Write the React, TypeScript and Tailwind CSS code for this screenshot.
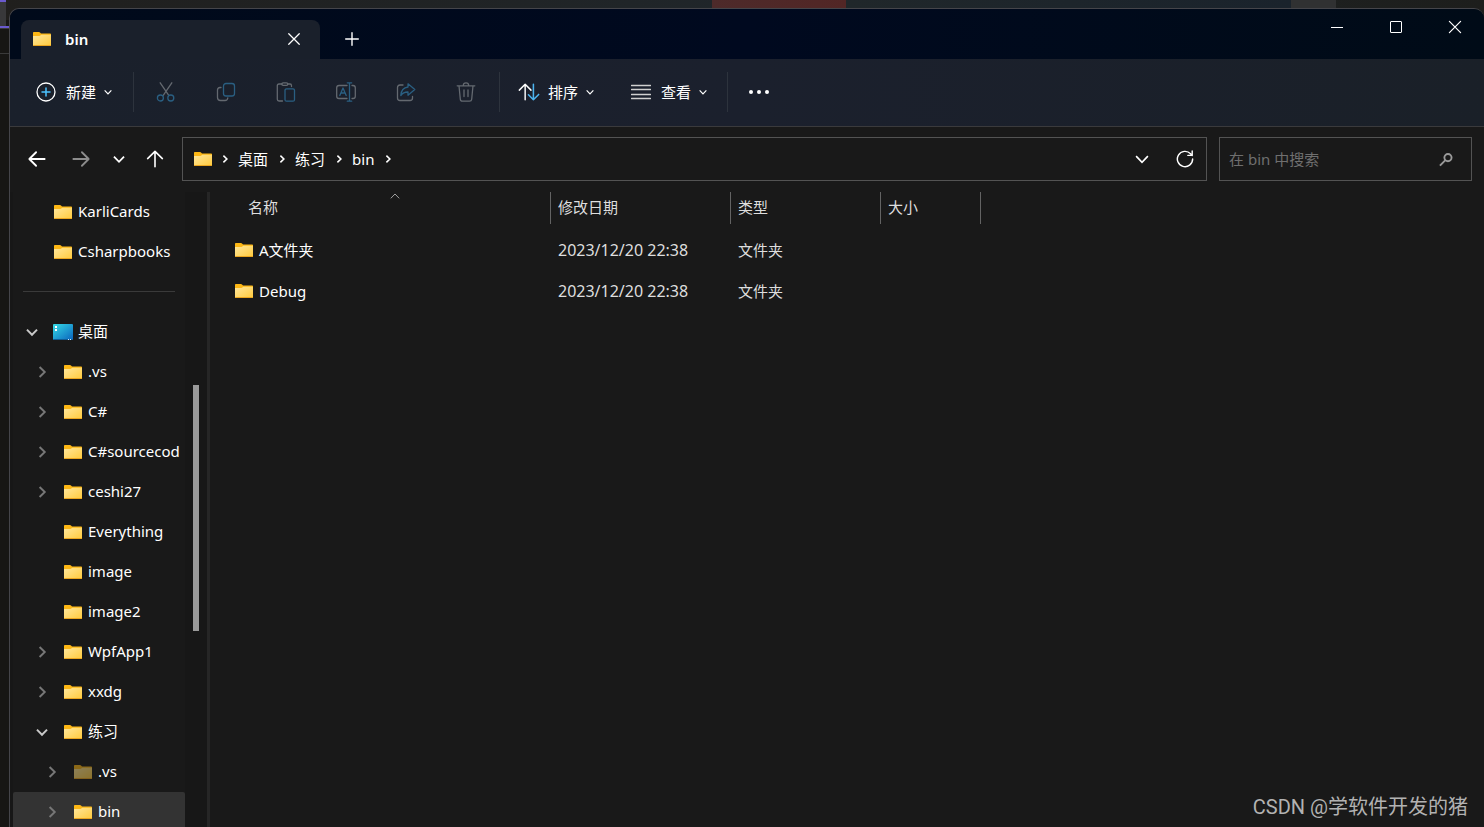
import type { ReactNode } from 'react'

type TreeItem = {
  name: string
  level: 0 | 1 | 2
  state?: 'open' | 'closed'
  icon?: 'folder' | 'desktop' | 'hidden'
  selected?: boolean
}

const pinned: TreeItem[] = [
  { name: 'KarliCards', level: 0 },
  { name: 'Csharpbooks', level: 0 },
]

const tree: TreeItem[] = [
  { name: '桌面', level: 0, state: 'open', icon: 'desktop' },
  { name: '.vs', level: 1, state: 'closed' },
  { name: 'C#', level: 1, state: 'closed' },
  { name: 'C#sourcecod', level: 1, state: 'closed' },
  { name: 'ceshi27', level: 1, state: 'closed' },
  { name: 'Everything', level: 1 },
  { name: 'image', level: 1 },
  { name: 'image2', level: 1 },
  { name: 'WpfApp1', level: 1, state: 'closed' },
  { name: 'xxdg', level: 1, state: 'closed' },
  { name: '练习', level: 1, state: 'open' },
  { name: '.vs', level: 2, state: 'closed', icon: 'hidden' },
  { name: 'bin', level: 2, state: 'closed', selected: true },
]

const files = [
  { name: 'A文件夹', date: '2023/12/20 22:38', type: '文件夹' },
  { name: 'Debug', date: '2023/12/20 22:38', type: '文件夹' },
]

const indent = { 0: 'pl-0', 1: 'pl-[10px]', 2: 'pl-5' }

function FolderIcon({ faded = false }: { faded?: boolean }) {
  return (
    <svg width="18" height="14" viewBox="0 0 18 14" className={faded ? 'shrink-0 opacity-50' : 'shrink-0'} aria-hidden="true">
      <defs>
        <linearGradient id="folder-front" x1="0" y1="0" x2="1" y2="1">
          <stop offset="0" stopColor="#ffe79c" />
          <stop offset="1" stopColor="#ffca3c" />
        </linearGradient>
      </defs>
      <path d="M0 .8Q0 0 .8 0H6q.6 0 1 .5L8 1.500h9.200q.8 0 .8.8V13H0z" fill="#fdb714" />
      <path d="M0 4h6.400q.6 0 1-.4l.8-.8H18V13.200q0 .8-.8.8H.8Q0 14 0 13.200z" fill="url(#folder-front)" />
      <path d="M0 13h18v.2q0 .8-.8.8H.8Q0 14 0 13.200z" fill="#eba51e" />
    </svg>
  )
}

function DesktopIcon() {
  return (
    <svg width="20" height="16" viewBox="0 0 20 16" className="shrink-0" aria-hidden="true">
      <defs>
        <linearGradient id="desktop-bg" x1="0" y1="0" x2="1" y2="1">
          <stop offset="0" stopColor="#35dbe6" />
          <stop offset="1" stopColor="#0a63bd" />
        </linearGradient>
      </defs>
      <rect width="20" height="16" rx="1" fill="url(#desktop-bg)" />
      <path d="M0 15h20q0 1-1 1H1q-1 0-1-1z" fill="#0f5c94" />
      <path d="M2 2h2v2H2zM2 5h2v2H2z" fill="#fff" />
      <path d="M15 15h1v1h-1zM17 15h1v1h-1z" fill="#cfe9ff" />
    </svg>
  )
}

function Chevron({ dir, size = 10, width = 1.5 }: { dir: 'up' | 'down' | 'right'; size?: number; width?: number }) {
  const paths = {
    up: 'M.8 7.300 5 3l4.200 4.300',
    down: 'M.8 3 5 7.300 9.200 3',
    right: 'M3 .8 7.300 5 3 9.200',
  }
  return (
    <svg width={size} height={size} viewBox="0 0 10 10" fill="none" stroke="currentColor" strokeWidth={width} aria-hidden="true">
      <path d={paths[dir]} />
    </svg>
  )
}

function Icon({ children, size = 20, width = 1.3 }: { children: ReactNode; size?: number; width?: number }) {
  return (
    <svg
      width={size}
      height={size}
      viewBox="0 0 20 20"
      fill="none"
      stroke="currentColor"
      strokeWidth={width}
      strokeLinecap="round"
      strokeLinejoin="round"
      className="shrink-0"
      aria-hidden="true"
    >
      {children}
    </svg>
  )
}

const blue = '#2a5f82'

const actions = [
  {
    label: '剪切',
    icon: (
      <>
        <path d="M4.200.8 12.600 13.200M15.800.8 7.400 13.200" />
        <circle cx="4.400" cy="16" r="3" stroke={blue} />
        <circle cx="14.800" cy="16" r="3" stroke={blue} />
      </>
    ),
  },
  {
    label: '复制',
    icon: (
      <>
        <path d="M5 5.500H4q-2.500 0-2.500 2.500v7.500Q1.500 18.500 4.500 18.500H9q2.500 0 2.800-2.500" />
        <rect x="7.500" y="1.500" width="11" height="12.500" rx="2.500" stroke={blue} />
      </>
    ),
  },
  {
    label: '粘贴',
    icon: (
      <>
        <path d="M6 2H3Q1.300 2 1.300 3.700v13.600Q1.300 19 3 19h3.500M12 2h2q1.500 0 1.500 1.700V4.500" />
        <rect x="5.800" y=".8" width="6" height="2.600" rx="1.300" />
        <rect x="9" y="6.800" width="9.500" height="12.400" rx="1.500" stroke={blue} />
      </>
    ),
  },
  {
    label: '重命名',
    icon: (
      <>
        <path d="M11 3.500H3Q.7 3.500.7 5.800v8.400Q.7 16.500 3 16.500h8M16 3.500h1q2.300 0 2.300 2.300v8.400q0 2.300-2.300 2.300h-1" />
        <path d="M3.800 13.500 7 6l3.200 7.500M5 11h4M13.500.8v18.400M11.300.8h4.400M11.300 19.200h4.400" stroke={blue} />
      </>
    ),
  },
  {
    label: '共享',
    icon: (
      <>
        <path d="M7 3H4Q1.500 3 1.500 5.500V16q0 2.500 2.500 2.500h10q2.500 0 2.500-2.500v-1.500" />
        <path d="M12 1.800 18.800 7.500 12 13.200V10Q7.500 9.800 4.800 13.500 5.300 5.800 12 5z" stroke={blue} />
      </>
    ),
  },
  {
    label: '删除',
    icon: (
      <>
        <path d="M1.200 3.800h17.600M7.300 3.500q0-2.700 2.700-2.700t2.700 2.700M3 3.800l1.300 13.400q.2 2 2.200 2h7q2 0 2.200-2L17 3.800M8 8v6.500M12 8v6.500" />
      </>
    ),
  },
]

function Separator() {
  return <div className="h-10 w-px bg-[#2d333d]" />
}

function TitleBar() {
  return (
    <header className="flex h-[50px] items-end bg-linear-to-r from-[#000a1a] via-[#00091f] to-[#000b17]">
      <div className="ml-[11px] flex h-[39px] w-[299px] items-center rounded-t-lg bg-[#1a202b] pr-4 pl-3">
        <FolderIcon />
        <span className="ml-3.5 grow text-[15px] font-semibold">bin</span>
        <button type="button" aria-label="关闭标签页" className="flex size-5 items-center justify-center">
          <Icon size={14}>
            <path d="M2.500 2.500l15 15M17.500 2.500l-15 15" strokeWidth="1.800" />
          </Icon>
        </button>
      </div>
      <button type="button" aria-label="新建标签页" className="ml-3 flex h-[39px] w-10 items-center justify-center">
        <Icon size={14}>
          <path d="M10 1v18M1 10h18" strokeWidth="2" />
        </Icon>
      </button>
      <div className="ml-auto flex self-start">
        <button type="button" aria-label="最小化" className="flex h-9 w-[59px] items-center justify-center">
          <span className="h-px w-3 bg-white" />
        </button>
        <button type="button" aria-label="最大化" className="flex h-9 w-[59px] items-center justify-center">
          <span className="size-3 rounded-[1px] border border-white" />
        </button>
        <button type="button" aria-label="关闭" className="flex h-9 w-[59px] items-center justify-center">
          <Icon size={14}>
            <path d="M2 2l16 16M18 2 2 18" strokeWidth="1.700" />
          </Icon>
        </button>
      </div>
    </header>
  )
}

function Toolbar() {
  return (
    <div className="flex h-[69px] items-center border-b border-[#3a3a3c] bg-linear-to-r from-[#1a202b] via-[#1b202d] to-[#1a2028] text-[15px]">
      <button type="button" className="flex h-10 w-[123px] items-center pl-[26px]">
        <Icon>
          <circle cx="10" cy="10" r="9" />
          <path d="M10 6v8M6 10h8" stroke="#4cc2ff" strokeWidth="1.500" />
        </Icon>
        <span className="mr-2 ml-2.5">新建</span>
        <Chevron dir="down" size={8} />
      </button>
      <Separator />
      <div className="mr-[3px] ml-0.5 flex text-[#646970]">
        {actions.map((a) => (
          <button key={a.label} type="button" aria-label={a.label} disabled className="flex h-10 w-[60px] items-center justify-center">
            <Icon>{a.icon}</Icon>
          </button>
        ))}
      </div>
      <Separator />
      <button type="button" className="flex h-10 w-28 items-center pl-[18px]">
        <Icon size={22}>
          <path d="M6.500 17V3M1.200 8.300 6.500 3l5.300 5.300" />
          <path d="M14 3v14M9.500 12.500 14 17l4.800-4.800" stroke="#4cb4f0" strokeWidth="1.400" />
        </Icon>
        <span className="mr-2 ml-2">排序</span>
        <Chevron dir="down" size={8} />
      </button>
      <button type="button" className="flex h-10 w-[115px] items-center pl-[19px]">
        <Icon>
          <path d="M.5 3.500h19M.5 7.500h19M.5 12.500h19M.5 16.500h19" stroke="#d0d0d0" />
        </Icon>
        <span className="mr-2 ml-2.5">查看</span>
        <Chevron dir="down" size={8} />
      </button>
      <Separator />
      <button type="button" aria-label="更多" className="flex h-10 w-[62px] items-center justify-center gap-1">
        <span className="size-1 rounded-full bg-white" />
        <span className="size-1 rounded-full bg-white" />
        <span className="size-1 rounded-full bg-white" />
      </button>
    </div>
  )
}

function Crumb({ children }: { children: ReactNode }) {
  return (
    <>
      <button type="button">{children}</button>
      <span className="flex w-[27px] justify-center">
        <Chevron dir="right" size={8} width={2} />
      </span>
    </>
  )
}

function AddressRow() {
  return (
    <div className="flex h-[65px] items-start pt-2.5 pr-3 text-[15px]">
      <button type="button" aria-label="后退" className="ml-[5px] flex h-11 w-11 items-center justify-center">
        <Icon size={18}>
          <path d="M18.500 10H2M9 2.500 1.500 10 9 17.500" strokeWidth="2" />
        </Icon>
      </button>
      <button type="button" aria-label="前进" className="flex h-11 w-11 items-center justify-center text-[#8c8c8c]">
        <Icon size={18}>
          <path d="M1.500 10H18M11 2.500 18.500 10 11 17.500" strokeWidth="2" />
        </Icon>
      </button>
      <button type="button" aria-label="最近位置" className="flex h-11 w-8 items-center justify-center">
        <Chevron dir="down" size={12} />
      </button>
      <button type="button" aria-label="上移" className="flex h-11 w-10 items-center justify-center">
        <Icon size={18}>
          <path d="M10 18.500V2M1.800 9.500 10 1.500l8.200 8" strokeWidth="1.800" />
        </Icon>
      </button>
      <nav className="ml-[7px] flex h-11 grow items-center border border-[#535353] pl-[11px]">
        <FolderIcon />
        <span className="flex w-[26px] justify-center">
          <Chevron dir="right" size={8} width={2} />
        </span>
        <Crumb>桌面</Crumb>
        <Crumb>练习</Crumb>
        <Crumb>bin</Crumb>
        <button type="button" aria-label="历史记录" className="ml-auto flex h-10 w-[43px] items-center justify-center">
          <Chevron dir="down" size={14} width={1.2} />
        </button>
        <button type="button" aria-label="刷新" className="flex h-10 w-[43px] items-center justify-center">
          <Icon size={18}>
            <path d="M18.500 10a8.500 8.500 0 1 1-2.300-5.800L18 6M18 1.200V6h-4.800" strokeWidth="1.600" />
          </Icon>
        </button>
      </nav>
      <label className="ml-3 flex h-11 w-[253px] items-center border border-[#535353] pr-[18px] pl-[9px]">
        <input
          type="search"
          aria-label="搜索"
          placeholder="在 bin 中搜索"
          className="min-w-0 grow bg-transparent outline-none placeholder:text-[#6f6f6f]"
        />
        <svg width="15" height="15" viewBox="0 0 15 15" fill="none" stroke="#9a9a9a" strokeWidth="2" aria-hidden="true">
          <circle cx="9.500" cy="5.500" r="3.800" />
          <path d="M6.800 8.200 1 14" />
        </svg>
      </label>
    </div>
  )
}

function TreeRow({ item }: { item: TreeItem }) {
  return (
    <li className={indent[item.level] + (item.selected ? ' rounded-t-xs bg-[#333333]' : '')}>
      <button type="button" className="flex h-10 w-full items-center overflow-hidden text-left text-[15px] whitespace-nowrap">
        <span className={'mr-[3px] flex w-[37px] shrink-0 justify-center ' + (item.state === 'open' ? 'text-[#c8c8c8]' : 'text-[#777777]')}>
          {item.state && <Chevron dir={item.state === 'open' ? 'down' : 'right'} size={12} width={1.6} />}
        </span>
        <span className="mr-[5px] flex w-5 shrink-0 justify-center">
          {item.icon === 'desktop' ? <DesktopIcon /> : <FolderIcon faded={item.icon === 'hidden'} />}
        </span>
        {item.name}
      </button>
    </li>
  )
}

function Sidebar() {
  return (
    <aside className="flex w-[200px] shrink-0 overflow-hidden border-r-3 border-[#262626] bg-[#171717] pl-[3px]">
      <div className="w-[172px] shrink-0 bg-[#191919]">
        <ul>
          {pinned.map((item) => (
            <TreeRow key={item.name} item={item} />
          ))}
        </ul>
        <div className="flex h-10 items-center px-2.5">
          <hr className="w-full border-[#3a3a3a]" />
        </div>
        <ul>
          {tree.map((item, i) => (
            <TreeRow key={i} item={item} />
          ))}
        </ul>
      </div>
      <div className="pt-[193px] pl-2">
        <div className="h-[246px] w-1.5 bg-[#9a9a9a]" />
      </div>
    </aside>
  )
}

function FileList() {
  return (
    <main className="grow overflow-hidden">
      <table className="w-[771px] table-fixed text-left text-[15px]">
        <colgroup>
          <col className="w-[341px]" />
          <col className="w-[180px]" />
          <col className="w-[150px]" />
          <col className="w-[100px]" />
        </colgroup>
        <thead className="text-[#dedede]">
          <tr>
            <th className="p-0 pb-1.5 font-normal">
              <div className="relative flex h-8 items-center border-r border-[#636363] pl-[38px]">
                名称
                <span className="absolute -top-px left-[180px] text-[#a0a0a0]">
                  <Chevron dir="up" size={10} width={1} />
                </span>
              </div>
            </th>
            {['修改日期', '类型', '大小'].map((h) => (
              <th key={h} className="p-0 pb-1.5 font-normal">
                <div className="flex h-8 items-center border-r border-[#636363] pl-[7px]">{h}</div>
              </th>
            ))}
          </tr>
        </thead>
        <tbody>
          {files.map((f) => (
            <tr key={f.name} className="h-[41px] text-[#dedede]">
              <td className="p-0 pl-[25px]">
                <div className="flex items-center gap-1.5 text-white">
                  <FolderIcon />
                  {f.name}
                </div>
              </td>
              <td className="p-0 pl-[7px] text-base">{f.date}</td>
              <td className="p-0 pl-[7px]">{f.type}</td>
              <td />
            </tr>
          ))}
        </tbody>
      </table>
    </main>
  )
}

// Slices of the windows behind the explorer, visible along the top and left edges
function Backdrop() {
  return (
    <div className="absolute inset-0 bg-[#171614]">
      <div className="flex h-5 bg-linear-to-r from-[#201f1d] via-[#20262a] to-[#1d1e1c]">
        <div className="w-[48%]" />
        <div className="w-[9%] bg-linear-to-r from-[#4d2a2a] to-[#522625]" />
        <div className="w-[30%] bg-linear-to-r from-[#20272a] to-[#1a232c]" />
        <div className="w-[3%] bg-[#303132]" />
      </div>
      <div className="absolute top-0 left-0 h-[54px] w-2.5 border-b border-[#3a3a3a]">
        <div className="h-[26px] w-1.5 border-t-2 border-[#6a5acd] bg-[#38383a]" />
        <div className="h-[3px] border-t-2 border-b border-t-[#6a5acd] border-b-[#3a3a3a]" />
      </div>
    </div>
  )
}

export default function App() {
  return (
    <div className="relative flex h-screen overflow-hidden bg-[#171614] pt-2 pl-[9px] font-['Noto_Sans','Noto_Sans_CJK_SC',sans-serif] text-white">
      <Backdrop />
      <div className="relative flex grow flex-col overflow-hidden rounded-t-[10px] border-t border-l border-[#45454a] bg-[#191919]">
        <TitleBar />
        <Toolbar />
        <AddressRow />
        <div className="flex min-h-0 grow">
          <Sidebar />
          <FileList />
        </div>
      </div>
      <p className="absolute right-4 bottom-1.5 font-[Roboto,'Noto_Sans_CJK_SC',sans-serif] text-xl text-[#b2b2b2]">CSDN @学软件开发的猪</p>
    </div>
  )
}
